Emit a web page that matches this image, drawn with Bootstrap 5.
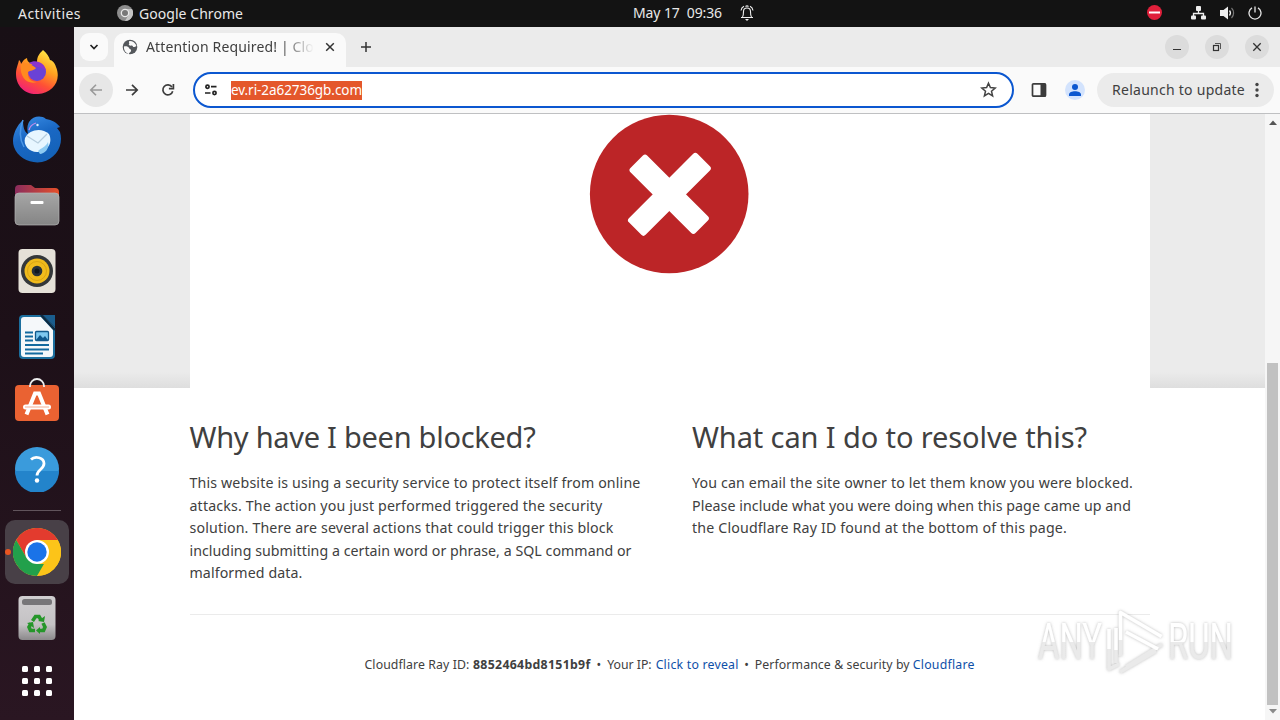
<!DOCTYPE html>
<html lang="en">
<head>
<meta charset="utf-8">
<title>Attention Required! | Cloudflare</title>
<link href="https://cdn.jsdelivr.net/npm/bootstrap@5.3.0/dist/css/bootstrap.min.css" rel="stylesheet">
<style>
body{width:1280px;height:720px;overflow:hidden;font-family:"Noto Sans","Open Sans",sans-serif;font-size:14px;line-height:20px;color:#404040;background:#fff}
svg{display:block;flex:none}
.t{white-space:pre;display:inline-block}
.topbar{height:27px;background:#131313;color:#e8e8e8;font-size:14px}
.topbar .clock{left:633px;top:3px}
.dock{width:74px;padding-top:13px;background:linear-gradient(#180f15,#1d1018 45%,#2a1622)}
.slot{height:66px}
.slot.apps{height:60px}
.sep{height:17px;padding-top:8px}
.sep i{display:block;width:48px;height:1px;background:#61545c}
.running{width:64px;height:64px;border-radius:10px;background:#484047}
.dot{left:0;top:29px;width:6px;height:6px;border-radius:3px;background:#e95420}
.tabs{height:40px;background:#ebebeb;padding-left:6px;padding-right:11px}
.tabsearch{width:28px;height:28px;border-radius:9px;background:#fafafa;margin-top:6px}
.tab1{width:232px;height:34px;margin:6px 0 0 6px;background:#fafafa;border-radius:10px 10px 0 0;padding:0 9px 6px 8px}
.tabtitle{width:168px;overflow:hidden;font-size:14px;-webkit-mask-image:linear-gradient(90deg,#000 80%,transparent 100%);mask-image:linear-gradient(90deg,#000 80%,transparent 100%)}
.winbtn{width:24px;height:24px;border-radius:50%;background:#dcdcdc}
.tools{height:46px;background:#fafafa;padding:0 6px 0 5px}
.rnd{width:34px;height:34px;border-radius:50%}
.rnd.off{background:#e7e7e7}
.omni{width:821px;height:36px;border:2px solid #0b57d0;border-radius:18px;background:#fff;margin-left:8px;padding:0 15px 0 8px}
.sel{background:#e4572b;color:#fff;height:19px;line-height:18px;font-size:13.5px}
.relaunch{width:177px;height:34px;border-radius:17px;background:#ebebeb;margin-left:12px;padding:0 10px 0 15px;font-size:14px}
.page{height:607px;border-top:1px solid #bfc0c2}
.hero{height:274px;background:linear-gradient(#ebebeb 0,#ebebeb 258px,#dedede 274px)}
.wrap{width:960px;margin:0 auto}
.hero .wrap{height:274px;background:#fff;padding-left:399.5px}
h2{font-size:29px;line-height:39px;margin:0 0 16px;font-weight:400;height:39px}
.cols{padding-top:29px;height:227px;border-bottom:1px solid #ebebeb;margin-bottom:40px}
.cols .left{width:502.5px}
.copy{font-size:14.2px;line-height:22.5px}
.copy .t{display:block;width:max-content}
.foot{font-size:12.3px;line-height:20px;padding-left:175px;height:20px}
.foot a{color:#0e4fa8;text-decoration:none}
.fr{margin-left:4px}
.sb{width:15px;background:#f6f6f6;position:relative}
.thumb{position:absolute;left:2px;top:249px;width:11px;height:342px;background:#c1c1c1}
.up{position:absolute;left:4px;top:6px}
.down{position:absolute;left:4px;bottom:6px}
.wm{position:absolute;left:1030px;top:600px;overflow:visible}
</style>
</head>
<body class="d-flex flex-column">
<header class="topbar d-flex align-items-center position-relative">
  <span class="t" data-w="63" style="margin-left:18px">Activities</span>
  <svg style="margin:-1px 6px 0 36px" width="16" height="16" viewBox="0 0 16 16"><circle cx="8" cy="8" r="8" fill="#8d8d8d"/><path d="M8 4h7A8 8 0 0 1 8 16l3.500-6z" fill="#c4c4c4"/><circle cx="8" cy="8" r="4.300" fill="#e8e8e8"/><circle cx="8" cy="8" r="3" fill="#777"/></svg>
  <span class="t" data-w="104">Google Chrome</span>
  <div class="clock position-absolute d-flex"><span class="t" data-w="89">May 17  09:36</span>
    <svg style="margin:2px 0 0 17px" width="16" height="17" viewBox="0 0 16 17" fill="none" stroke="#eee" stroke-width="1.100"><path d="M2 12.500h12M3.500 12c1-1.500 1-3 1-5.500a3.500 3.500 0 0 1 7 0c0 2.500 0 4 1 5.500M2 5.500C2.300 3.500 3.500 2 5 1.300M14 5.500c-.3-2-1.500-3.500-3-4.200M6.500 1.500a2.500 2.500 0 0 1 3 0"/><path d="M6 14h4l-2 2z" fill="#eee" stroke="none"/></svg></div>
  <svg class="ms-auto" style="margin:-1px 28px 0 0" width="16" height="16" viewBox="0 0 16 16"><circle cx="7.500" cy="7.500" r="7.500" fill="#e0203b"/><path d="M2 7.500h11" stroke="#fff" stroke-width="2"/></svg>
  <svg style="margin:-1px 13px 0 0" width="16" height="16" viewBox="0 0 16 16" fill="#eee"><rect x="5" y="1" width="5" height="5" rx="1"/><rect x="0" y="10.500" width="5" height="4" rx="1"/><rect x="10" y="10.500" width="5" height="4" rx="1"/><path d="M7.500 5v3.500M2.500 11V8.500h10V11" fill="none" stroke="#eee" stroke-width="1.300"/></svg>
  <svg style="margin:-1px 12px 0 0" width="16" height="16" viewBox="0 0 16 16"><path d="M0 5h3.500L8 1.500v13L3.500 11H0z" fill="#eee"/><path d="M9.500 5.500a4 4 0 0 1 0 5" fill="none" stroke="#eee" stroke-width="1.300"/><path d="M11.500 3a7 7 0 0 1 0 10" fill="none" stroke="#777" stroke-width="1.200"/></svg>
  <svg style="margin:-1px 18px 0 0" width="14" height="14" viewBox="0 0 14 14" fill="none" stroke="#e6e6e6" stroke-width="1.300"><path d="M4 1.900a6 6 0 1 0 6 0M7 .5v6"/></svg>
</header>
<div class="d-flex flex-fill">
<nav class="dock d-flex flex-column align-items-center flex-shrink-0">
  <div class="slot d-flex align-items-center"><svg style="margin-top:-2px" width="48" height="48" viewBox="0 0 48 48">
    <defs><linearGradient id="ff" x1=".8" y1="0" x2=".3" y2="1"><stop offset="0" stop-color="#fff04a"/><stop offset=".4" stop-color="#ffa020"/><stop offset=".7" stop-color="#ff5035"/><stop offset="1" stop-color="#f0207a"/></linearGradient></defs>
    <path d="M30 2c4 3 6 7 7 10 2 0 5 3 6 7 6 14-4 26-18 27C12 47 3 38 3 26c0-6 2-9 3-14 1 1 2 2 2 4 2-3 3-5 6-6 0 2 1 4 3 5l7-1c0-6 3-9 6-12z" fill="url(#ff)"/><circle cx="24" cy="24" r="9" fill="#6a42d6"/><path d="M16 15c6-4 16-1 17 8-3-3-5-4-9-4z" fill="#8a35cf"/><path d="M8 16c5-2 10 0 15 4-2 3-6 2-8 4-1 6 3 10 9 10-9 3-18-4-16-18z" fill="#ff8a20"/></svg></div>
  <div class="slot d-flex align-items-center"><svg width="50" height="50" viewBox="0 0 50 50">
    <defs><linearGradient id="tb" x1="0" y1="0" x2=".4" y2="1"><stop offset="0" stop-color="#3d91e8"/><stop offset=".5" stop-color="#1a68c4"/><stop offset="1" stop-color="#1462b8"/></linearGradient></defs>
    <path d="M11 6C3 13-1 25 2 33c4 11 16 17 28 15 14-3 22-17 18-30l-3-4 3-1c-4-5-8-7-14-8-5-4-13-3-17 3-2 4-2 8-1 12-4-2-5-8-5-14z" fill="url(#tb)"/><path d="M11 6C7 16 8 26 12 33" fill="none" stroke="#4b96e6" stroke-width="1.500"/><path d="M13 24c4-8 16-11 24-4 4 8-1 18-12 18-8 0-14-7-12-14z" fill="#e7f6ff"/><path d="m15 22 11 7 9-9" fill="none" stroke="#b6cddd" stroke-width="1.300"/><path d="M26 37c3-3 8-4 10-9 2 7-4 12-8 12z" fill="#8dcbf2"/><circle cx="25.500" cy="11" r="1.200" fill="#d7f0ff"/><path d="M17 16c1-4 4-6 7-7" fill="none" stroke="#c08be8" stroke-width="1.300"/></svg></div>
  <div class="slot d-flex align-items-center"><svg width="46" height="42" viewBox="0 0 46 42">
    <defs><linearGradient id="fo"><stop stop-color="#8a2c5d"/><stop offset="1" stop-color="#e5502a"/></linearGradient><linearGradient id="fg" x2="0" y2="1"><stop stop-color="#a6a6a6"/><stop offset="1" stop-color="#858585"/></linearGradient></defs>
    <path d="M1 20V5q0-4 4-4h12l4 3h20q4 0 4 4v12z" fill="url(#fo)"/><rect x="1" y="9" width="44" height="32" rx="4" fill="url(#fg)" stroke="#b5b5b5" stroke-width=".7"/><rect x="16.500" y="17" width="13" height="3" rx="1" fill="#fff"/></svg></div>
  <div class="slot d-flex align-items-center"><svg width="38" height="46" viewBox="0 0 38 46"><rect x=".5" y="1" width="37" height="44" rx="4" fill="#e5e1d8"/><circle cx="19" cy="23" r="16" fill="#34383a"/><circle cx="19" cy="23" r="12.500" fill="#f0bb1c"/><circle cx="19" cy="23" r="9.500" fill="none" stroke="#d9a412"/><circle cx="19" cy="23" r="5.300" fill="#29323a"/><circle cx="19" cy="23" r="2.500" fill="#111820"/></svg></div>
  <div class="slot d-flex align-items-center"><svg width="38" height="46" viewBox="0 0 38 46"><path d="M5 1h20l12 12v28q0 4-4 4H5q-4 0-4-4V5q0-4 4-4z" fill="#1c6f9e"/><path d="M6 3h17l12 13v24q0 3-3 3H6q-3 0-3-3V6q0-3 3-3z" fill="#f5f8fa"/><path d="M25 1h12v12z" fill="#1a5d8d"/><path d="m23 1 14 15" stroke="#0e2a40" stroke-width="2.500"/><path d="M7 18.500h8M7 22.500h8M7 26.500h8M7 31h24M7 35.500h24M7 39.500h18" stroke="#136a9f" stroke-width="1.800"/><rect x="17.500" y="17.500" width="13" height="9" rx="1" fill="#7ec8ef" stroke="#135a8c" stroke-width="1.300"/><path d="m18 26 4-5 3 3 2-2 3 4z" fill="#0f578b"/></svg></div>
  <div class="slot d-flex align-items-center"><svg style="margin-top:-6px" width="46" height="44" viewBox="0 0 46 44">
    <rect x="1" y="7" width="44" height="36" rx="4" fill="#ea6232"/><path d="M16 9V8a7 7 0 0 1 14 0v1" fill="none" stroke="#eee" stroke-width="1.800"/><path d="m12.500 36.500 8.500-21h4l8.500 21" fill="none" stroke="#fff" stroke-width="4"/><rect x="9" y="26.500" width="28" height="5" rx="2.500" fill="#fff"/><path d="M11 29h24" stroke="#f09a7a" stroke-width=".8"/></svg></div>
  <div class="slot d-flex align-items-center"><svg style="margin-top:-1px" width="46" height="46" viewBox="0 0 46 46"><circle cx="23" cy="23" r="22" fill="#3a9bdc"/><path d="M1 25h44a22 22 0 0 1-44 0z" fill="#2384cb"/><path d="M17 13.500c4-4 13-2 13 4 0 6-7 6-7 12" fill="none" stroke="#fff" stroke-width="2.800"/><circle cx="23" cy="34.500" r="2.200" fill="#fff"/></svg></div>
  <div class="sep"><i></i></div>
  <div class="slot d-flex align-items-center"><div class="running d-flex align-items-center justify-content-center position-relative"><span class="dot position-absolute"></span>
    <svg width="48" height="48" viewBox="0 0 48 48"><circle cx="24" cy="24" r="24" fill="#fcc419"/><path d="M3.200 12A24 24 0 0 1 44.800 12H24L13.600 30z" fill="#e33b2e"/><path d="M3.200 12 13.600 30 24 36h10.400L24 48A24 24 0 0 1 3.200 12z" fill="#22a04b"/><path d="M44.800 12A24 24 0 0 1 24 48l10.400-18L24 12z" fill="#fcc419"/><circle cx="24" cy="24" r="12" fill="#fff"/><circle cx="24" cy="24" r="9.700" fill="#1a73e8"/></svg></div></div>
  <div class="slot d-flex align-items-center"><svg width="38" height="46" viewBox="0 0 38 46"><defs><linearGradient id="tr" x2="0" y2="1"><stop stop-color="#d0ced0"/><stop offset=".65" stop-color="#c4c2c4"/><stop offset="1" stop-color="#8b898b"/></linearGradient></defs><rect x=".5" y="1" width="37" height="44" rx="4" fill="url(#tr)"/><rect x="4" y="4" width="30" height="6" rx="2.500" fill="#777679"/>
    <g fill="none" stroke="#25962a" stroke-width="3.600"><path d="m14.500 26 3-4.500h3.500l2 3.500"/><path d="m25 28 2 4-1.500 3.500h-4.500"/><path d="M17 35.500h-4.500L11 32l2-3.500"/></g><path d="m20 26 6 1 1-6zM22 32v7l-4-3.500zM9 28l6-1 1 6z" fill="#25962a"/></svg></div>
  <div class="slot apps d-flex align-items-center"><svg width="30" height="30" viewBox="0 0 30 30" fill="#fff"><rect width="6" height="6" rx="1.500"/><rect x="12" width="6" height="6" rx="1.500"/><rect x="24" width="6" height="6" rx="1.500"/><rect y="12" width="6" height="6" rx="1.500"/><rect x="12" y="12" width="6" height="6" rx="1.500"/><rect x="24" y="12" width="6" height="6" rx="1.500"/><rect y="24" width="6" height="6" rx="1.500"/><rect x="12" y="24" width="6" height="6" rx="1.500"/><rect x="24" y="24" width="6" height="6" rx="1.500"/></svg></div>
</nav>
<main class="d-flex flex-column flex-fill">
  <div class="tabs d-flex">
    <div class="tabsearch d-flex align-items-center justify-content-center"><svg width="10" height="8" viewBox="0 0 10 8"><path d="m1.500 2 3.500 3.500L8.500 2" fill="none" stroke="#222" stroke-width="1.700"/></svg></div>
    <div class="tab1 d-flex align-items-center">
      <svg style="margin-right:8px" width="16" height="16" viewBox="0 0 16 16"><circle cx="8" cy="8" r="7.300" fill="#55585c"/><path d="M2 7.500c2-.5 4.500 0 5 1.500s2.500 1 2 3-2 1-2 3c-3-.5-5.500-4-5-7.500zM7.500 2c-1.500 1.500.5 2-.5 3s1 2 2.500 1.500 1 2 3 1.500 2-1 1.600-2C13 3.500 10 1.800 7.500 2z" fill="#fafafa"/></svg>
      <div class="tabtitle"><span class="t" data-w="168">Attention Required! | Clo</span></div>
      <svg class="ms-auto" width="14" height="14" viewBox="0 0 14 14"><path d="m3.200 3.200 7.600 7.600m0-7.600-7.600 7.600" stroke="#333" stroke-width="1.500"/></svg>
    </div>
    <svg style="margin:14px 0 0 14px" width="12" height="12" viewBox="0 0 12 12"><path d="M6 1v10M1 6h10" stroke="#333" stroke-width="1.500"/></svg>
    <div class="d-flex ms-auto gap-3 align-items-center">
      <div class="winbtn"><svg width="24" height="24"><path d="M8 14.500h8" stroke="#333"/></svg></div>
      <div class="winbtn"><svg width="24" height="24" fill="none" stroke="#333"><rect x="8.500" y="10.500" width="5" height="5" stroke-width="1.200"/><path d="M10 8.500h5.500V14" stroke-width=".8"/></svg></div>
      <div class="winbtn"><svg width="24" height="24"><path d="m8.300 8.300 7.400 7.400m0-7.400-7.400 7.400" stroke="#333" stroke-width="1.300"/></svg></div>
    </div>
  </div>
  <div class="tools d-flex align-items-center">
    <div class="rnd off d-flex align-items-center justify-content-center"><svg width="14" height="14" viewBox="0 0 14 14" fill="none" stroke="#999" stroke-width="1.600"><path d="M13 7H2M7 1.800 1.800 7 7 12.200"/></svg></div>
    <div class="rnd d-flex align-items-center justify-content-center" style="margin-left:2px"><svg width="14" height="14" viewBox="0 0 14 14" fill="none" stroke="#3c3c3c" stroke-width="1.700"><path d="M1 7h11M7 1.800 12.200 7 7 12.200"/></svg></div>
    <div class="rnd d-flex align-items-center justify-content-center" style="margin-left:2px"><svg width="14" height="14" viewBox="0 0 14 14" fill="none" stroke="#3c3c3c" stroke-width="1.700"><path d="M11.700 8.200A5 5 0 1 1 11 4"/><path d="M12.400 1v4.600H7.900"/></svg></div>
    <div class="omni d-flex align-items-center">
      <svg style="margin:0 12px 0 1px" width="15" height="14" viewBox="0 0 15 14" fill="none" stroke="#222" stroke-width="1.700"><circle cx="3.500" cy="3.700" r="1.600"/><path d="M7 3.700h5.500M1 10h5.500"/><circle cx="10.500" cy="10" r="1.600"/></svg>
      <span class="sel t" data-w="131">ev.ri-2a62736gb.com</span>
      <svg class="ms-auto" style="margin-top:-1px" width="17" height="17" viewBox="0 0 17 17"><path d="m8.500 2.200 1.900 4.400 4.800.4-3.700 3.200 1.100 4.700-4.100-2.500-4.100 2.500 1.100-4.700L1.800 7l4.800-.4z" fill="none" stroke="#444" stroke-width="1.500"/></svg>
    </div>
    <svg style="margin-left:17px" width="16" height="16" viewBox="0 0 16 16"><rect x="1.500" y="1.800" width="13" height="12.400" rx="1" fill="none" stroke="#3b3b3b" stroke-width="1.700"/><path d="M9.500 1.500h5v13h-5z" fill="#3b3b3b"/></svg>
    <svg style="margin-left:18px" width="20" height="20" viewBox="0 0 20 20"><circle cx="10" cy="10" r="10" fill="#d3e3fd"/><circle cx="10" cy="7" r="3" fill="#0b57d0"/><path d="M4 16v-1.500c0-4.500 12-4.500 12 0V16z" fill="#0b57d0"/></svg>
    <div class="relaunch d-flex align-items-center"><span class="t" data-w="133">Relaunch to update</span><svg style="margin-left:9.500px" width="4" height="16" fill="#444"><circle cx="2" cy="2.500" r="1.700"/><circle cx="2" cy="8" r="1.700"/><circle cx="2" cy="13.500" r="1.700"/></svg></div>
  </div>
  <div class="page d-flex">
    <div class="flex-fill">
      <div class="hero"><div class="wrap"><svg width="160" height="160" viewBox="589 114 160 160"><circle cx="669.200" cy="194" r="79.300" fill="#bc2527"/><g fill="#fff"><rect x="-46" y="-11.800" width="92" height="23.600" rx="3" transform="translate(669.200 194.200) rotate(45)"/><rect x="-48.500" y="-11.800" width="97" height="23.600" rx="3" transform="translate(669.400 194.300) rotate(-45)"/></g></svg></div></div>
      <div class="wrap">
        <div class="cols d-flex">
          <section class="left">
            <h2><span class="t" data-w="346">Why have I been blocked?</span></h2>
            <div class="copy"><span class="t" data-w="451">This website is using a security service to protect itself from online</span><span class="t" data-w="413">attacks. The action you just performed triggered the security</span><span class="t" data-w="424">solution. There are several actions that could trigger this block</span><span class="t" data-w="442">including submitting a certain word or phrase, a SQL command or</span><span class="t" data-w="113">malformed data.</span></div>
          </section>
          <section>
            <h2><span class="t" data-w="395">What can I do to resolve this?</span></h2>
            <div class="copy"><span class="t" data-w="441">You can email the site owner to let them know you were blocked.</span><span class="t" data-w="439">Please include what you were doing when this page came up and</span><span class="t" data-w="375">the Cloudflare Ray ID found at the bottom of this page.</span></div>
          </section>
        </div>
        <footer class="foot d-flex"><span class="t" data-w="105">Cloudflare Ray ID:</span><b class="t" style="margin-left:3.500px" data-w="117.500">8852464bd8151b9f</b><span class="t" style="margin-left:6px" data-w="6">•</span><span class="t" style="margin-left:6px" data-w="44.500">Your IP:</span><a href="#" class="t fr" data-w="83">Click to reveal</a><span class="t" style="margin-left:5.500px" data-w="6">•</span><span class="t" style="margin-left:6px" data-w="155">Performance &amp; security by</span><a href="#" class="t" style="margin-left:3px" data-w="62">Cloudflare</a></footer>
      </div>
    </div>
    <div class="sb"><svg class="up" width="8" height="5"><path d="M0 5 4 .5 8 5z" fill="#555"/></svg><div class="thumb"></div><svg class="down" width="8" height="5"><path d="m0 0 4 4.500L8 0z" fill="#8a8a8a"/></svg></div>
  </div>
</main>
</div>
<svg class="wm" width="230" height="84" viewBox="0 0 230 84">
  <defs><filter id="sh" x="-10%" y="-20%" width="120%" height="140%"><feDropShadow dx="0" dy="0" stdDeviation="1.500" flood-color="#888" flood-opacity=".6"/></filter><linearGradient id="wg" x2="0" y2="1"><stop offset=".5" stop-color="#fff"/><stop offset=".5" stop-color="#eaeaea"/></linearGradient></defs>
  <g filter="url(#sh)" fill="url(#wg)" font-family="Roboto,'Liberation Sans',sans-serif" font-size="50">
    <text x="8" y="59" textLength="64" lengthAdjust="spacingAndGlyphs">ANY</text>
    <text x="138" y="59" textLength="65" lengthAdjust="spacingAndGlyphs">RUN</text>
    <g fill="none" stroke="url(#wg)" stroke-width="3.500" stroke-linejoin="round"><path d="M90.500 56V12.500l41 24M96 67l36-22.500"/><path d="M79 29v40l10-5"/><path d="m96 32 32 17M90 72l36-21M86 28v35"/></g>
  </g>
</svg>
<script src="https://cdn.jsdelivr.net/npm/bootstrap@5.3.0/dist/js/bootstrap.bundle.min.js"></script>
<script>
// Track each text run out to its set measure (data-w, in px).
document.querySelectorAll('[data-w]').forEach(function (el) {
  var n = el.textContent.length, gap = el.dataset.w - el.getBoundingClientRect().width;
  if (n > 1) el.style.letterSpacing = (gap / n) + 'px';
});
</script>
</body>
</html>
